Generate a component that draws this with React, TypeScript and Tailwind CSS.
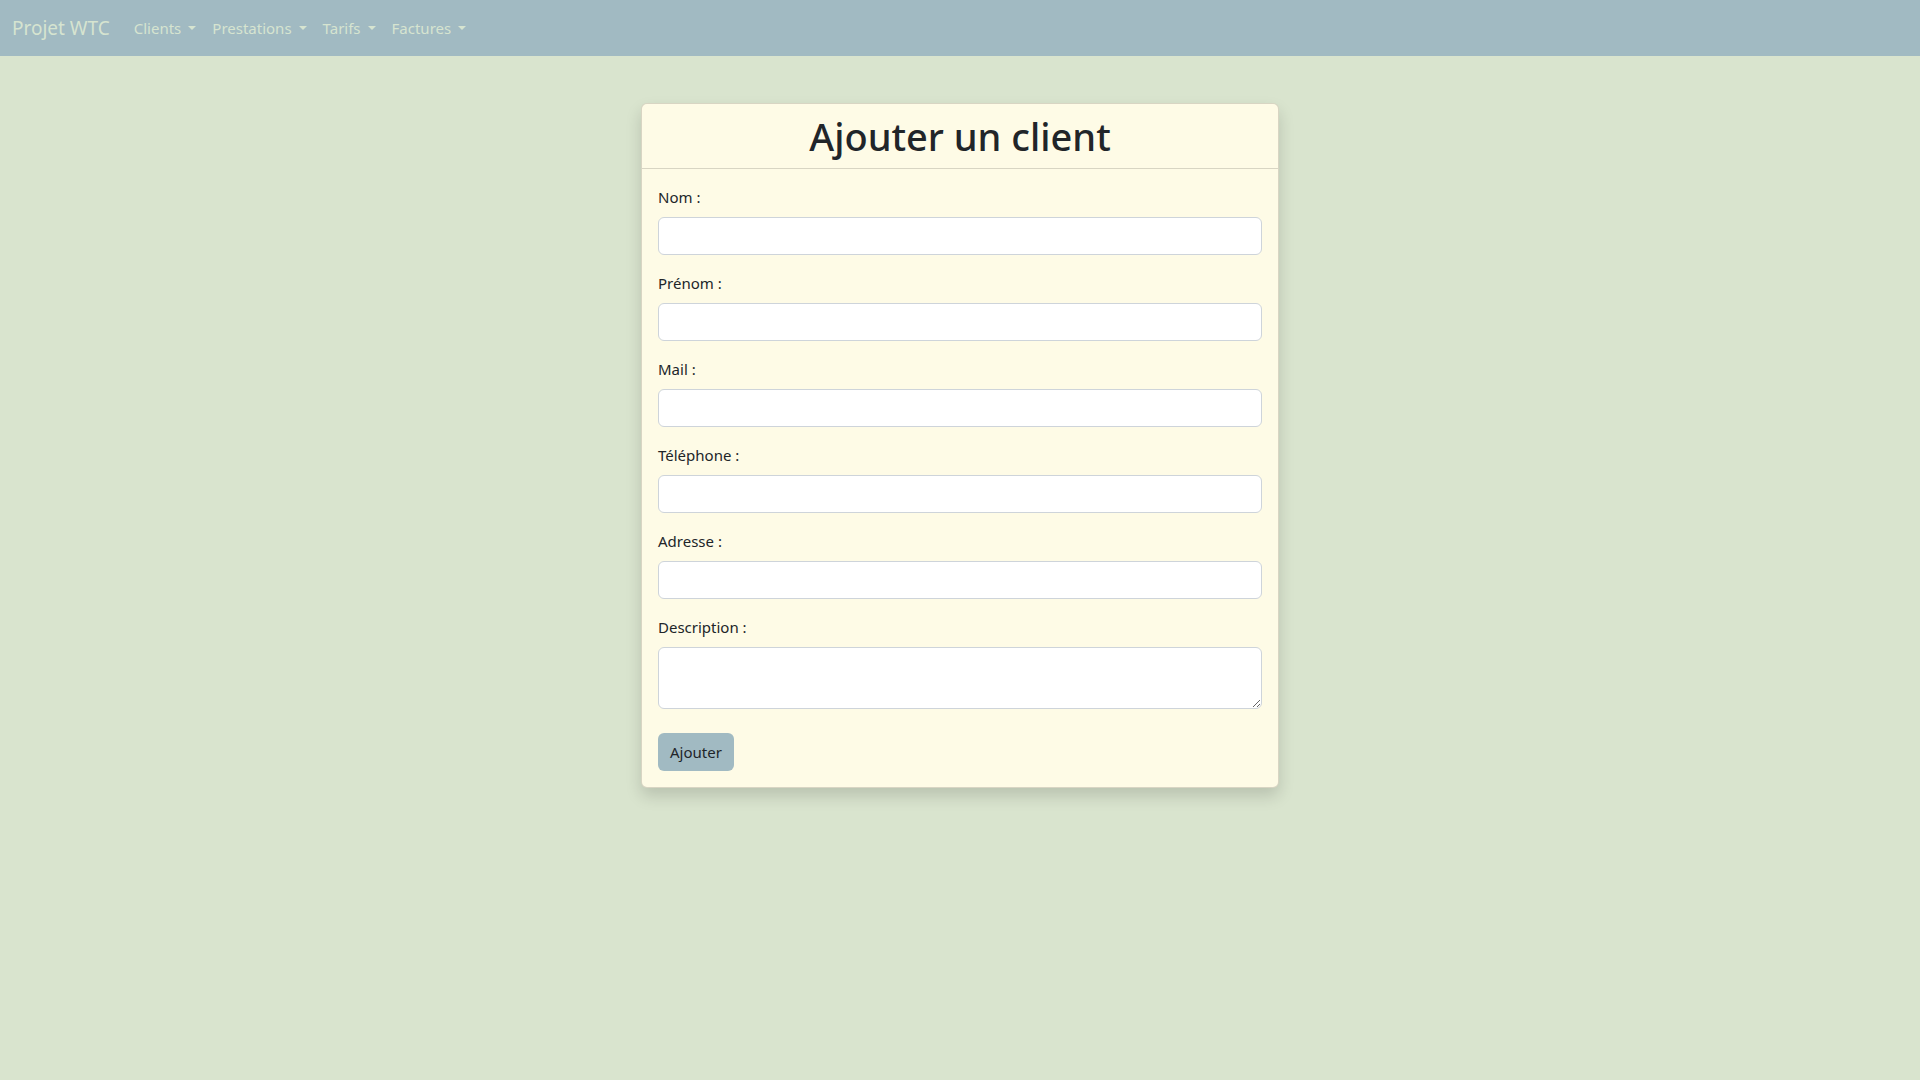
import React from 'react';

const fields = [
  { id: 'nom', label: 'Nom :' },
  { id: 'prenom', label: 'Prénom :' },
  { id: 'mail', label: 'Mail :' },
  { id: 'telephone', label: 'Téléphone :' },
  { id: 'adresse', label: 'Adresse :' },
];

const menus = ['Clients', 'Prestations', 'Tarifs', 'Factures'];

const Caret = () => (
  <span className="ml-[7px] inline-block align-[3px] border-t-[4px] border-x-[4px] border-t-current border-x-transparent" />
);

const App = () => {
  return (
    <div
      className="min-h-screen bg-[#d9e4ce] text-[#212529]"
      style={{ fontFamily: '"Segoe UI", "Noto Sans", "Open Sans", Arial, sans-serif' }}
    >
      <nav className="flex items-center h-[56px] px-3 bg-[#a1bac2]">
        <a href="#" className="mr-4 text-[19px] leading-[30px] text-[#d6e4d0]">
          Projet WTC
        </a>
        <ul className="flex items-center">
          {menus.map((m) => (
            <li key={m}>
              <a href="#" className="flex items-center px-2 py-2 text-[15px] leading-6 text-[#d6e4d0]">
                {m}
                <Caret />
              </a>
            </li>
          ))}
        </ul>
      </nav>

      <main className="flex justify-center pt-[47px]">
        <div className="w-[638px] bg-[#fefbe6] border border-black/15 rounded-md shadow-[0_8px_16px_rgba(0,0,0,0.15)]">
          <div className="px-4 py-2 border-b border-black/15">
            <h1 className="text-center text-[38px] leading-[48px] font-medium">Ajouter un client</h1>
          </div>
          <form className="p-4 flex flex-col" onSubmit={(e) => e.preventDefault()}>
            {fields.map((f) => (
              <div key={f.id} className="mb-4 flex flex-col">
                <label htmlFor={f.id} className="mb-2 text-[15px] leading-6">
                  {f.label}
                </label>
                <input
                  id={f.id}
                  type="text"
                  className="h-[38px] px-3 bg-white border border-[#ced4da] rounded-md outline-none"
                />
              </div>
            ))}
            <div className="mb-4 flex flex-col">
              <label htmlFor="description" className="mb-2 text-[15px] leading-6">
                Description :
              </label>
              <textarea
                id="description"
                rows={2}
                className="h-[62px] px-3 py-[6px] bg-white border border-[#ced4da] rounded-md outline-none resize-y"
              />
            </div>
            <div className="mt-2">
              <button
                type="submit"
                className="h-[38px] px-3 text-[15px] leading-6 bg-[#a1bac2] rounded-md text-[#212529]"
              >
                Ajouter
              </button>
            </div>
          </form>
        </div>
      </main>
    </div>
  );
};

export default App;
